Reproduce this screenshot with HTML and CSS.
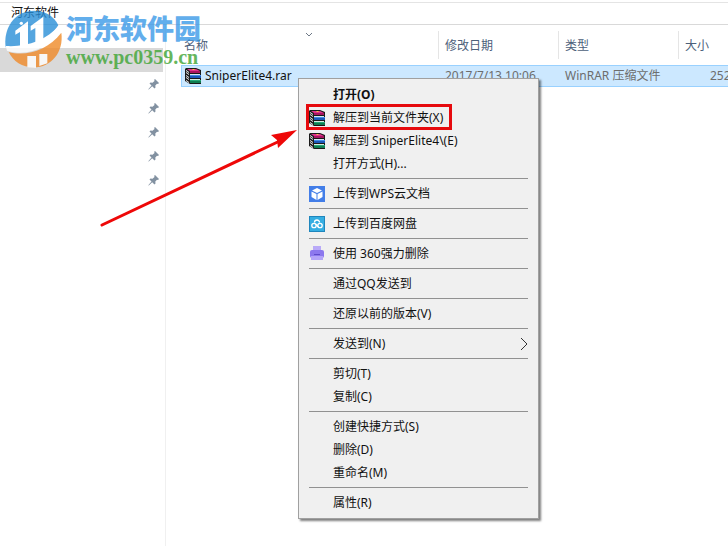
FILE: index.html
```
<!DOCTYPE html>
<html lang="zh-CN">
<head>
  <meta charset="utf-8">
  <title>河东软件</title>
  <link rel="stylesheet" href="styles.css">
</head>
<body>
  <!-- shared icons -->
  <svg class="defs" aria-hidden="true">
    <symbol id="rar" viewBox="0 0 16 16">
      <path d="M1 0h10l5 2v14H5L0 13V1z" fill="#1a1a1a"/>
      <path d="M2 1h9l4 2H5z" fill="#e0308c"/>
      <path d="M5 3h10v2H5z" fill="#a8145f"/>
      <path d="M7 1h2l1 1H8z" fill="#f5c842"/>
      <path d="M1 2l3 2v1L1 3zM1 4l3 2v1L1 5zM1 7l3 2v1L1 8zM1 9l3 2v1L1 10zM1 12l3 2v1l-3-2z" fill="#f4f4f4"/>
      <path d="M5 6h10v1H5z" fill="#d9e6f2"/>
      <path d="M5 7h11v3H5z" fill="#1b57b8"/>
      <path d="M5 7h11v1H5z" fill="#3f8be6"/>
      <path d="M5 11h10v1H5z" fill="#d5ece2"/>
      <path d="M5 12h11v3H5z" fill="#0f7d51"/>
      <path d="M5 12h11v1H5z" fill="#25a878"/>
    </symbol>
    <symbol id="pin" viewBox="0 0 12 12">
      <path d="M7 1l4 4-1 1-1-.3L7.300 7.500 7.500 9.500l-1 1L4.200 8.300 0.800 11.600 0.300 11.200 3.500 7.500 1.500 5.500l1-1 2 .2L6.500 3 6.200 1.800z" fill="#8291a1"/>
    </symbol>
  </svg>

  <header class="address">河东软件</header>
  <div class="explorer">
    <nav class="sidebar">
      <ul>
        <li class="current"></li>
        <li><svg><use href="#pin"/></svg></li>
        <li><svg><use href="#pin"/></svg></li>
        <li><svg><use href="#pin"/></svg></li>
        <li><svg><use href="#pin"/></svg></li>
        <li><svg><use href="#pin"/></svg></li>
      </ul>
    </nav>
    <main class="files">
      <table>
        <colgroup>
          <col class="col-name"><col class="col-date"><col class="col-type"><col>
        </colgroup>
        <thead>
          <tr>
            <th>名称<svg class="sort" viewBox="0 0 8 5"><path d="M1 1l3 3 3-3" fill="none" stroke="#6d7886"/></svg></th>
            <th>修改日期</th>
            <th>类型</th>
            <th>大小</th>
          </tr>
        </thead>
        <tbody>
          <tr>
            <td class="name"><div class="file"><svg><use href="#rar"/></svg>SniperElite4.rar</div></td>
            <td>2017/7/13 10:06</td>
            <td>WinRAR 压缩文件</td>
            <td class="size">252</td>
          </tr>
        </tbody>
      </table>
    </main>
  </div>

  <div class="watermark">
    <svg viewBox="0 0 180 180" aria-hidden="true">
      <path d="M5 112C-3 55 32 2 90 2c34 0 60 16 73 44C135 92 80 112 5 112z" fill="#2a8fd8"/>
      <path d="M14 126c52 14 116-4 158-58 8 58-30 104-83 104-34 0-62-18-75-46z" fill="#f08a28"/>
      <path d="M34 62l38-28v84l-24 2V66l-14 8z" fill="#fff"/>
      <path d="M80 48l38-28v88l-24 6V54l-14 8z" fill="#fff"/>
      <path d="M70 138h26v36l-26-2zM106 132h24v28l-24 8z" fill="#fff"/>
      <path d="M5 108c62 4 122-16 160-62l6 14c-36 52-96 82-162 62z" fill="#fff"/>
      <circle cx="52" cy="40" r="5" fill="#fff"/>
    </svg>
    <div>
      <p class="brand">河东软件园</p>
      <p class="site">www.pc0359.cn</p>
    </div>
  </div>

  <ul class="menu" role="menu">
    <li><button class="default">打开(O)</button></li>
    <li><button class="marked"><svg><use href="#rar"/></svg>解压到当前文件夹(X)</button></li>
    <li><button><svg><use href="#rar"/></svg>解压到 SniperElite4\(E)</button></li>
    <li><button>打开方式(H)...</button></li>
    <li class="line" role="separator"></li>
    <li><button>
      <svg viewBox="0 0 16 16">
        <path d="M0 0h16v16H0z" fill="#437ee8"/>
        <path d="M8 2l5 2.500L8 7 3 4.500zM2.500 5.500l5 2.500v6l-5-3zM13.500 5.500l-5 2.500v6l5-3z" fill="#fff"/>
      </svg>上传到WPS云文档</button></li>
    <li class="line" role="separator"></li>
    <li><button>
      <svg viewBox="0 0 16 16">
        <path d="M0 0h16v16H0z" fill="#1f86bd"/>
        <path d="M1 1h14v14H1z" fill="#35aee2"/>
        <g fill="none" stroke="#fff" stroke-width="1.300">
          <path d="M5.500 6.500a2.500 2.500 0 0 1 5 0"/>
          <circle cx="5" cy="9.500" r="2.200"/>
          <circle cx="11" cy="9.500" r="2.200"/>
          <path d="M6.500 8l3 3"/>
        </g>
      </svg>上传到百度网盘</button></li>
    <li class="line" role="separator"></li>
    <li><button>
      <svg viewBox="0 0 16 16">
        <path d="M4 0h8v6H4z" fill="#b9aaf8"/>
        <rect x="1" y="4" width="14" height="8" rx="2" fill="#8c78ee"/>
        <path d="M2 10h12v4H2z" fill="#b3a4f8"/>
        <path d="M5 8h6v1H5z" fill="#5f4bc9"/>
      </svg>使用 360强力删除</button></li>
    <li class="line" role="separator"></li>
    <li><button>通过QQ发送到</button></li>
    <li class="line" role="separator"></li>
    <li><button>还原以前的版本(V)</button></li>
    <li class="line" role="separator"></li>
    <li><button>发送到(N)<svg class="more" viewBox="0 0 8 14"><path d="M1 1l6 6-6 6" fill="none" stroke="#333"/></svg></button></li>
    <li class="line" role="separator"></li>
    <li><button>剪切(T)</button></li>
    <li><button>复制(C)</button></li>
    <li class="line" role="separator"></li>
    <li><button>创建快捷方式(S)</button></li>
    <li><button>删除(D)</button></li>
    <li><button>重命名(M)</button></li>
    <li class="line" role="separator"></li>
    <li><button>属性(R)</button></li>
  </ul>

  <svg class="arrow" viewBox="0 0 200 100" aria-hidden="true">
    <path d="M2 95L184 9" stroke="#ee0808" stroke-width="3" stroke-linecap="round"/>
    <path d="M197 0l-26 5 6 5 1 8z" fill="#ee0808"/>
  </svg>
</body>
</html>
```
FILE: styles.css
```
* {
  box-sizing: border-box;
}
body {
  margin: 0;
  min-height: 100vh;
  display: flex;
  flex-direction: column;
  position: relative;
  overflow: hidden;
  background: #fff;
  color: #111;
  font-family: "Noto Sans", "Noto Sans CJK SC", sans-serif;
  font-size: 12px;
  line-height: 20px;
}
ul {
  list-style: none;
  margin: 0;
  padding: 0;
}
.defs {
  position: absolute;
  width: 0;
  height: 0;
}
.address {
  height: 25px;
  padding: 0 11px;
  border-bottom: 1px solid #d9d9d9;
  background: linear-gradient(#e4e4e4, #e4e4e4) 0 2px / 100% 1px no-repeat;
  line-height: 26px;
}
.explorer {
  flex: 1;
  display: flex;
}
.sidebar {
  flex: 0 0 166px;
  padding: 23px 2px 0 0;
  border-right: 1px solid #f0f0f0;
}
.sidebar li {
  height: 24px;
  display: flex;
  align-items: center;
  justify-content: flex-end;
  padding-right: 3px;
}
.sidebar li.current {
  background: #d9d9d9;
}
.sidebar svg {
  width: 12px;
  height: 12px;
}
.files {
  flex: 1;
  min-width: 0;
  padding-left: 15px;
}
table {
  width: 100%;
  table-layout: fixed;
  border-collapse: separate;
  border-spacing: 0;
}
.col-name {
  width: 258px;
}
.col-date,
.col-type {
  width: 120px;
}
th {
  position: relative;
  height: 40px;
  padding: 2px 0 0 6px;
  background: linear-gradient(#e5e5e5, #e5e5e5) right 6px / 1px 28px no-repeat;
  color: #4c607a;
  font-weight: normal;
  text-align: left;
}
th:first-child {
  padding-left: 3px;
}
th:last-child {
  background: none;
}
.sort {
  position: absolute;
  top: 7px;
  left: 48%;
  width: 8px;
  height: 5px;
}
td {
  height: 22px;
  padding: 0 0 0 6px;
  overflow: hidden;
  border: solid #99d1ff;
  border-width: 1px 0;
  background: #cce8ff;
  color: #6d6d6d;
  white-space: nowrap;
}
td.name {
  padding-left: 3px;
  border-left-width: 1px;
  color: #111;
}
td.size {
  padding-left: 31px;
}
.file {
  display: flex;
  align-items: center;
  gap: 4px;
}
.file svg {
  width: 16px;
  height: 16px;
}
.watermark {
  position: absolute;
  top: 10px;
  left: 4px;
  display: flex;
  gap: 2px;
  opacity: 0.8;
}
.watermark svg {
  width: 60px;
  height: 60px;
}
.watermark p {
  margin: 0;
}
.brand {
  color: #3c9ae8;
  font-size: 27px;
  font-weight: 900;
  line-height: 38px;
}
.site {
  color: #3fa535;
  font-family: "Liberation Serif", serif;
  font-size: 20px;
  font-weight: bold;
  line-height: 18px;
}
.menu {
  position: absolute;
  top: 78px;
  left: 298px;
  width: 241px;
  padding: 4px 2px;
  border: 1px solid #a0a0a0;
  background: #f0f0f0;
  box-shadow: 2px 2px 2px rgba(0, 0, 0, 0.5);
}
.menu button {
  position: relative;
  display: flex;
  align-items: center;
  width: 100%;
  height: 23px;
  padding: 0 8px 0 32px;
  border: 0;
  background: none;
  color: #111;
  font: inherit;
  text-align: left;
  white-space: nowrap;
}
.menu button:hover {
  background: #fff;
}
.menu svg {
  position: absolute;
  left: 8px;
  width: 16px;
  height: 16px;
}
.menu svg.more {
  left: auto;
  right: 8px;
  width: 8px;
  height: 14px;
}
.menu .default {
  font-weight: bold;
}
.menu .marked::after {
  content: "";
  box-sizing: border-box;
  position: absolute;
  top: -2px;
  left: 5px;
  width: 146px;
  height: 26px;
  border: 3px solid #e60a0e;
}
.line {
  height: 7px;
  padding: 3px 8px;
}
.line::before {
  content: "";
  display: block;
  height: 1px;
  background: #919191;
}
.arrow {
  position: absolute;
  top: 130px;
  left: 100px;
  width: 200px;
  height: 100px;
}
```
